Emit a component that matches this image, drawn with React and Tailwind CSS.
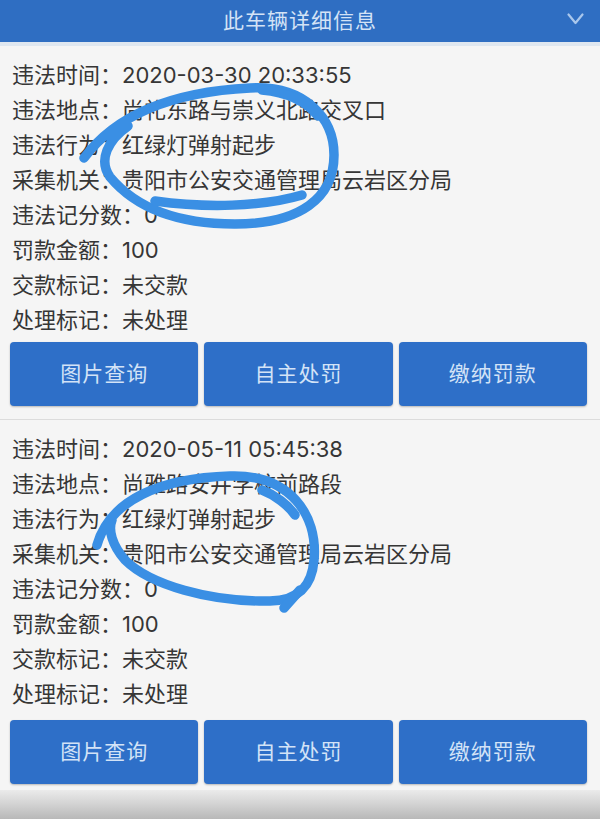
const records = [
  {
    time: '2020-03-30 20:33:55',
    place: '尚礼东路与崇义北路交叉口',
    act: '红绿灯弹射起步',
    office: '贵阳市公安交通管理局云岩区分局',
    points: '0',
    fine: '100',
    paid: '未交款',
    handled: '未处理',
  },
  {
    time: '2020-05-11 05:45:38',
    place: '尚雅路安井学校前路段',
    act: '红绿灯弹射起步',
    office: '贵阳市公安交通管理局云岩区分局',
    points: '0',
    fine: '100',
    paid: '未交款',
    handled: '未处理',
  },
];

const font = { fontFamily: '"Inter", "Noto Sans CJK SC", sans-serif' };

const Record = ({ r, btnGap }) => {
  const rows = [
    ['违法时间', r.time],
    ['违法地点', r.place],
    ['违法行为', r.act],
    ['采集机关', r.office],
    ['违法记分数', r.points],
    ['罚款金额', r.fine],
    ['交款标记', r.paid],
    ['处理标记', r.handled],
  ];
  return (
    <div className="flex flex-col">
      {/* Detail rows */}
      <div className="flex flex-col pl-[12px] pt-[12px] text-[22px] leading-[35px] text-[#363636]">
        {rows.map(([k, v]) => (
          <div key={k} className="whitespace-nowrap">
            {k}：{v}
          </div>
        ))}
      </div>

      {/* Actions */}
      <div className={`grid grid-cols-3 gap-[6px] pl-[10px] pr-[13px] ${btnGap}`}>
        {['图片查询', '自主处罚', '缴纳罚款'].map((t) => (
          <button
            key={t}
            className="h-[64px] rounded-[4px] bg-[#2e6fc8] text-[21px] tracking-[1px] text-[#d3e3f7] shadow-[0_1px_2px_rgba(0,0,0,0.25)]"
          >
            {t}
          </button>
        ))}
      </div>
    </div>
  );
};

const App = () => {
  return (
    <div className="relative flex h-[819px] w-[600px] flex-col overflow-hidden bg-[#f5f5f5]" style={font}>
      {/* Header */}
      <div className="relative flex h-[42px] shrink-0 items-center justify-center bg-[#2f6ec2]">
        <span className="text-[21px] tracking-[1px] text-[#d4e3f6]">此车辆详细信息</span>
        <svg className="absolute right-[16px] top-[13px]" width="17" height="12" viewBox="0 0 17 12">
          <path d="M1.5 1.5 L8.5 10 L15.5 1.5" fill="none" stroke="#a9c7ec" strokeWidth="2.2" strokeLinecap="round" strokeLinejoin="round" />
        </svg>
      </div>
      <div className="h-[4px] shrink-0 bg-[#dfe7f0]" />

      <Record r={records[0]} btnGap="mt-[4px]" />
      <div className="mt-[13px] h-px shrink-0 bg-[#dcdcdc]" />
      <Record r={records[1]} btnGap="mt-[8px]" />

      {/* Bottom edge */}
      <div className="mt-[6px] flex-1 bg-gradient-to-b from-[#ebebeb] via-[#d2d2d2] to-[#b8b8b8]" />

      {/* Hand-drawn pen marks */}
      <svg className="pointer-events-none absolute inset-0" width="600" height="819" viewBox="0 0 600 819">
        <g fill="none" stroke="#3a8fe4" strokeWidth="9.5" strokeLinecap="round" strokeLinejoin="round">
          <path d="M84 158 C115 116 170 92 250 88 C305 85 334 118 334 155 C334 198 300 224 235 224 C175 224 135 207 110 177 C98 160 108 140 128 126" />
          <path d="M155 201 C205 208 262 207 302 195" />
          <path d="M262 90 C285 92 305 100 318 116" />
          <path d="M97 545 C110 500 160 478 230 476 C290 474 318 515 314 560 C312 585 300 600 270 601 C210 602 150 585 125 560 C112 545 108 530 112 520" />
          <path d="M300 590 L284 608" />
          <path d="M262 490 C275 495 288 505 295 515" />
        </g>
      </svg>
    </div>
  );
};

export default App;
